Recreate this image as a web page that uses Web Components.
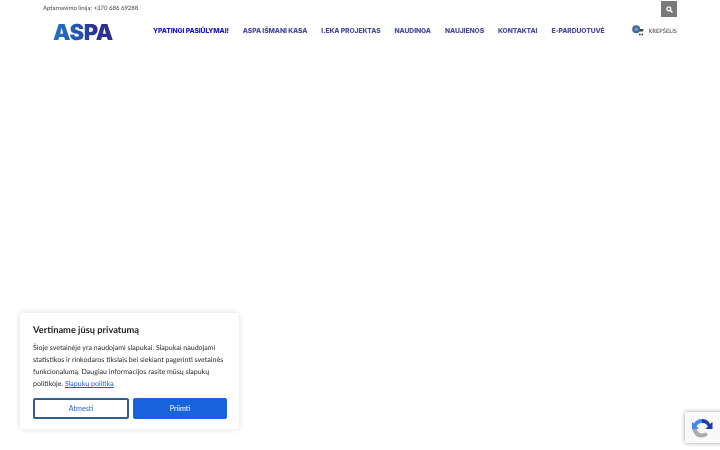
<!DOCTYPE html>
<html lang="lt">
<head>
<meta charset="utf-8">
<title>ASPA</title>
<style>
  html, body { margin: 0; height: 100%; background: #fff; overflow: hidden; }
  body { font-family: 'Lato', sans-serif; text-rendering: geometricPrecision; }
</style>
</head>
<body>
<aspa-header></aspa-header>
<cookie-box></cookie-box>
<recaptcha-badge></recaptcha-badge>

<script>
class AspaHeader extends HTMLElement {
  constructor() {
    super()
    this.attachShadow({ mode: 'open' })
    const items = ['YPATINGI PASIŪLYMAI!', 'ASPA IŠMANI KASA', 'I.EKA PROJEKTAS', 'NAUDINGA', 'NAUJIENOS', 'KONTAKTAI', 'E-PARDUOTUVĖ']
    this.shadowRoot.innerHTML = `<style>
      :host { display: block; height: 45px; font-family: 'Lato', sans-serif; filter: blur(.3px); }
      .top { display: flex; justify-content: space-between; align-items: flex-start; height: 17px; padding: 1px 43px 0 43px; }
      .phone { font-size: 6px; line-height: 15px; color: #444; }
      .search { width: 16px; height: 16px; background: #7a7a7a; display: flex; align-items: center; justify-content: center; }
      .main { display: flex; align-items: center; height: 26px; padding-left: 53px; }
      .logo { width: 61px; padding-top: 3px; font-family: 'Inter', sans-serif; font-weight: 900; font-size: 22px; line-height: 26px; letter-spacing: -.4px;
        background: linear-gradient(90deg, #2472c4 0%, #2160b8 30%, #2c3190 70%, #2d2f8a 100%); -webkit-background-clip: text; background-clip: text; -webkit-text-fill-color: transparent; }
      nav { display: flex; gap: 14px; margin-left: 39px; padding-bottom: 2px; font-family: 'Inter', sans-serif; font-weight: 800; font-size: 6.75px; letter-spacing: -.1px; color: #474c9c; white-space: nowrap; }
      nav span:first-child { color: #1717c4; }
      .cart { display: flex; align-items: center; margin-left: auto; margin-right: 43px; }
      .cart b { font-weight: 400; font-size: 5.8px; color: #444; margin-left: 4px; }
      .cart svg { display: block; margin-top: -2px; }
    </style>
    <div class="top">
      <span class="phone">Aptarnavimo linija: +370 686 69288</span>
      <div class="search"><svg width="7" height="7" viewBox="0 0 10 10"><circle cx="4" cy="4" r="2.8" fill="none" stroke="#fff" stroke-width="1.8"/><path d="M6 6l3.2 3.2" stroke="#fff" stroke-width="2"/></svg></div>
    </div>
    <div class="main">
      <div class="logo">ASPA</div>
      <nav>${items.map(t => `<span>${t}</span>`).join('')}</nav>
      <div class="cart">
        <svg width="12" height="11" viewBox="0 0 12 11"><path d="M6.500 6.500h4.500l.6-2.500H6.500z" fill="#3f444a"/><circle cx="7.800" cy="9.500" r=".9" fill="#3f444a"/><circle cx="10.200" cy="9.500" r=".9" fill="#3f444a"/><circle cx="4.200" cy="4.200" r="4" fill="#3f6e9c"/><circle cx="4.200" cy="4.200" r="1.600" fill="#7fa0c4"/></svg>
        <b>KREPŠELIS</b>
      </div>
    </div>`
  }
}

class CookieBox extends HTMLElement {
  constructor() {
    super()
    this.attachShadow({ mode: 'open' })
    this.shadowRoot.innerHTML = `<style>
      :host { position: fixed; left: 20px; top: 313px; width: 219px; height: 116px; box-sizing: border-box; padding: 10px 12px 0 13px; background: #fff;
        border-radius: 3px; box-shadow: 0 0 6px rgba(0,0,0,.14); font-family: 'Lato', sans-serif; color: #333; }
      h2, p, .btns { filter: blur(.3px); }
      h2 { margin: 0 0 6px; font-size: 9.3px; line-height: 13px; font-weight: 700; color: #222; }
      p { margin: 0; font-size: 7.05px; line-height: 12px; color: #2b2b2b; }
      a { color: #1863dc; }
      .btns { display: flex; gap: 4px; margin-top: 8px; }
      button { flex: 1; height: 21px; padding: 0; font: 400 7.200px 'Lato', sans-serif; border-radius: 2px; box-sizing: border-box; }
      .no { background: #fff; color: #2f68c4; border: 2px solid #2f5f92; }
      .yes { background: #1863dc; color: #fff; border: 1px solid #1863dc; }
    </style>
    <h2>Vertiname jūsų privatumą</h2>
    <p>Šioje svetainėje yra naudojami slapukai. Slapukai naudojami statistikos ir rinkodaros tikslais bei siekiant pagerinti svetainės funkcionalumą. Daugiau informacijos rasite mūsų slapukų politikoje. <a href="#">Slapukų politika</a></p>
    <div class="btns"><button class="no">Atmesti</button><button class="yes">Priimti</button></div>`
  }
}

class RecaptchaBadge extends HTMLElement {
  constructor() {
    super()
    this.attachShadow({ mode: 'open' })
    this.shadowRoot.innerHTML = `<style>
      :host { position: fixed; left: 685px; top: 412px; width: 60px; height: 31px; background: #f9f9f9; border-radius: 2px; box-shadow: 0 0 4px rgba(0,0,0,.4); display: flex; align-items: center; padding-left: 6px; box-sizing: border-box; }
      svg { display: block; }
    </style>
    <svg width="22" height="22" viewBox="0 0 22 22">
      <path d="M11 2a9 9 0 0 1 8 5l2.500-2v7h-7l2.300-2.300A5.500 5.500 0 0 0 11 6z" fill="#1c3aa9"/>
      <path d="M11 2a9 9 0 0 0-8 4.500L1 5v7h7L5.600 9.500A5.500 5.500 0 0 1 11 6z" fill="#4285f4"/>
      <path d="M1 12h4.600A5.500 5.500 0 0 0 14.500 15.200l2.500 2.600A9 9 0 0 1 2 14z" fill="#ababab"/>
      <path d="M6.500 13v7L4 17.500z" fill="#ababab"/>
    </svg>`
  }
}

customElements.define('aspa-header', AspaHeader)
customElements.define('cookie-box', CookieBox)
customElements.define('recaptcha-badge', RecaptchaBadge)
</script>
</body>
</html>
